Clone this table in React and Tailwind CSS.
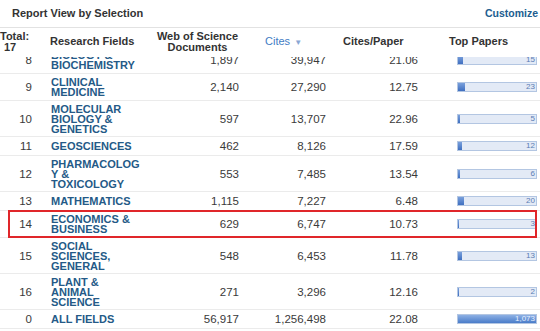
import React from "react";

const rows = [
  { r: "8", f: ["BIOLOGY &", "BIOCHEMISTRY"], d: "1,897", c: "39,947", cp: "21.06", t: "15", w: 5 },
  { r: "9", f: ["CLINICAL", "MEDICINE"], d: "2,140", c: "27,290", cp: "12.75", t: "23", w: 7 },
  { r: "10", f: ["MOLECULAR", "BIOLOGY &", "GENETICS"], d: "597", c: "13,707", cp: "22.96", t: "5", w: 2 },
  { r: "11", f: ["GEOSCIENCES"], d: "462", c: "8,126", cp: "17.59", t: "12", w: 4 },
  { r: "12", f: ["PHARMACOLOG", "Y &", "TOXICOLOGY"], d: "553", c: "7,485", cp: "13.54", t: "6", w: 2 },
  { r: "13", f: ["MATHEMATICS"], d: "1,115", c: "7,227", cp: "6.48", t: "20", w: 6 },
  { r: "14", f: ["ECONOMICS &", "BUSINESS"], d: "629", c: "6,747", cp: "10.73", t: "3", w: 1, hl: true },
  { r: "15", f: ["SOCIAL", "SCIENCES,", "GENERAL"], d: "548", c: "6,453", cp: "11.78", t: "13", w: 4 },
  { r: "16", f: ["PLANT &", "ANIMAL", "SCIENCE"], d: "271", c: "3,296", cp: "12.16", t: "2", w: 1 },
  { r: "0", f: ["ALL FIELDS"], d: "56,917", c: "1,256,498", cp: "22.08", t: "1,073", full: true },
];

const heights = { 1: "h-[19px]", 2: "h-[27px]", 3: "h-[36px]" };

function Bar({ t, w, full }) {
  return (
    <div className="relative h-[10px] w-[80px] border border-[#b3c6e2] bg-[#e3eaf6]">
      {full ? (
        <div className="absolute inset-0 bg-gradient-to-b from-[#8db0e4] to-[#4a7cc9]" />
      ) : (
        <div
          className="absolute left-0 top-0 bottom-0 bg-gradient-to-b from-[#7aa0dc] to-[#3f6fc0]"
          style={{ width: w + "px" }}
        />
      )}
      <span
        className={
          "absolute right-[1px] top-[-1px] text-[8px] leading-[10px] " +
          (full ? "text-[#e8f0ff]" : "text-[#5a7db5]")
        }
      >
        {t}
      </span>
    </div>
  );
}

const grid = "grid grid-cols-[50px_100px_95px_87px_92px_116px]";

export default function App() {
  return (
    <div
      className="w-[540px] h-[331px] overflow-hidden bg-white text-[#333]"
      style={{ fontFamily: '"Liberation Sans", Arial, sans-serif' }}
    >
      <div className="flex h-[28px] items-center justify-between border-b border-[#e2e2e2] pl-[12px] pr-[2px]">
        <span className="text-[11px] font-bold text-[#333]">Report View by Selection</span>
        <span className="text-[10.5px] font-bold text-[#215d8f]">Customize</span>
      </div>
      <div className={grid + " h-[29px] items-start pt-[3px] text-[11px] font-bold leading-[11px] text-[#333]"}>
        <div className="flex flex-col">
          <span>Total:</span>
          <span className="pl-[4px]">17</span>
        </div>
        <div className="pt-[5px]">Research Fields</div>
        <div className="text-center">
          Web of Science
          <br />
          Documents
        </div>
        <div className="pl-[20px] pt-[5px] font-normal text-[#3f7cc4]">
          Cites <span className="ml-[1px] text-[8px] text-[#8aa8d4]">▼</span>
        </div>
        <div className="pl-[11px] pt-[5px]">Cites/Paper</div>
        <div className="pl-[25px] pt-[5px]">Top Papers</div>
      </div>
      <div className="h-[274px] overflow-hidden">
        <div className="-mt-[10px]">
          {rows.map((row) => (
            <div
              key={row.r}
              className={
                grid +
                " relative items-center border-b border-[#ebebeb] text-[11.5px] leading-[12px] text-[#3a3a3a] " +
                heights[row.f.length]
              }
            >
              <div className="pr-[18px] text-right">{row.r}</div>
              <div className="flex flex-col pl-[1px] text-[11px] font-bold leading-[10px] text-[#245a87]">
                {row.f.map((l) => (
                  <span key={l}>{l}</span>
                ))}
              </div>
              <div className="pr-[6px] text-right">{row.d}</div>
              <div className="pr-[6px] text-right">{row.c}</div>
              <div className="pr-[6px] text-right">{row.cp}</div>
              <div className="pl-[33px]">
                <Bar t={row.t} w={row.w} full={row.full} />
              </div>
              {row.hl && (
                <div className="pointer-events-none absolute left-[8px] right-[3px] top-[-1px] bottom-[-1px] border-2 border-[#e0262a]" />
              )}
            </div>
          ))}
        </div>
      </div>
    </div>
  );
}
